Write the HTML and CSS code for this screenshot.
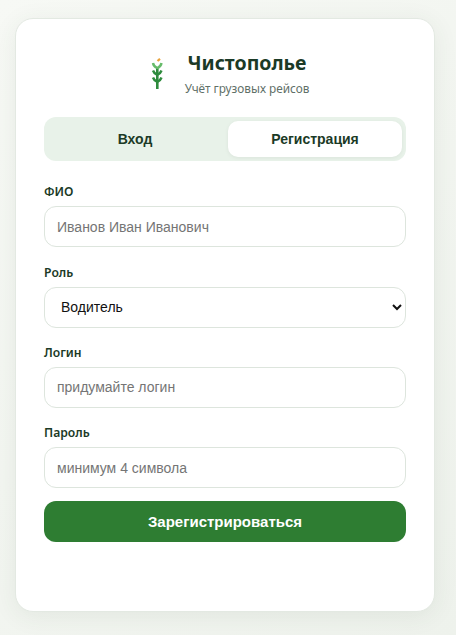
FILE: index.html
```html
<!DOCTYPE html>
<html lang="ru">
<head>
<meta charset="utf-8">
<title>Чистополье</title>
<link rel="stylesheet" href="styles.css">
</head>
<body>
<main class="card">
  <header class="brand">
    <svg class="logo" width="12" height="31" viewBox="0 0 12 31" aria-hidden="true">
      <path d="M6.3 31V9" stroke="#2e8b3d" stroke-width="2.6" fill="none"/>
      <path d="M2 5Q2.5 8.5 6.3 10Q10 8.5 10.5 5" stroke="#66bb6a" stroke-width="2.4" fill="none"/>
      <path d="M2 12.5Q3 15.5 6.3 17Q9.5 15.5 10.5 12.5M2 19.5Q3 22.5 6.3 24Q9.5 22.5 10.5 19.5" stroke="#2e8b3d" stroke-width="2.4" fill="none"/>
      <path d="M6.5 3 9 .8" stroke="#e8a33d" stroke-width="2.2" fill="none"/>
    </svg>
    <div class="brand-text">
      <h1 class="title">Чистополье</h1>
      <p class="subtitle">Учёт грузовых рейсов</p>
    </div>
  </header>
  <div class="tabs">
    <button class="tab" type="button">Вход</button>
    <button class="tab tab-active" type="button">Регистрация</button>
  </div>
  <form class="form">
    <div class="field">
      <label class="label" for="fio">ФИО</label>
      <input class="control" id="fio" type="text" placeholder="Иванов Иван Иванович">
    </div>
    <div class="field">
      <label class="label" for="role">Роль</label>
      <select class="control select" id="role">
        <option>Водитель</option>
      </select>
    </div>
    <div class="field">
      <label class="label" for="login">Логин</label>
      <input class="control" id="login" type="text" placeholder="придумайте логин">
    </div>
    <div class="field">
      <label class="label" for="pass">Пароль</label>
      <input class="control" id="pass" type="text" placeholder="минимум 4 символа">
    </div>
    <button class="submit" type="button">Зарегистрироваться</button>
  </form>
</main>
</body>
</html>
```
FILE: styles.css
```css
* { box-sizing: border-box; }
html, body { height: 100%; }
body {
  margin: 0;
  height: 635px;
  overflow: hidden;
  padding: 18px 21px 23px 15px;
  background: linear-gradient(135deg, #f7f9f5 0%, #eef2ec 100%);
  font-family: "Liberation Sans", Arial, sans-serif;
  color: #1b3a26;
}
.card {
  width: 420px;
  height: 594px;
  padding: 28px;
  background: #fff;
  border: 1px solid #e3e9e2;
  border-radius: 18px;
  box-shadow: 0 4px 24px rgba(46, 80, 50, 0.08);
}
.brand {
  display: flex;
  align-items: center;
  justify-content: center;
  gap: 22px;
  height: 53px;
  margin-bottom: 17px;
  padding-left: 10px;
}
.logo { flex: none; margin-top: -1px; }
.brand-text { text-align: center; }
.title {
  margin: 0;
  font: 700 19.5px/24px "Noto Sans", sans-serif;
  color: #1b3a26;
}
.subtitle {
  margin: 5px 0 0;
  font: 400 11.8px/16px "Noto Sans", sans-serif;
  color: #5f7068;
}
.tabs {
  display: grid;
  grid-template-columns: 1fr 1fr;
  gap: 6px;
  height: 44px;
  padding: 4px;
  background: #e8f2e9;
  border-radius: 12px;
}
.tab {
  border: 0;
  border-radius: 10px;
  background: transparent;
  font: 700 14px "Liberation Sans", sans-serif;
  color: #1b3a26;
}
.tab-active {
  background: #fff;
  box-shadow: 0 1px 4px rgba(0, 0, 0, 0.06);
}
.form { margin-top: 22.3px; }
.field { margin-bottom: 16.33px; }
.label {
  display: block;
  margin-bottom: 6px;
  font: 600 12.2px/17px "Noto Sans", sans-serif;
  color: #1b3a26;
}
.control {
  display: block;
  width: 100%;
  height: 41px;
  padding: 0 12px;
  background: #fff;
  border: 1px solid #dde5dd;
  border-radius: 12px;
  font: 400 14px "Liberation Sans", sans-serif;
  color: #1b3a26;
}
.control::placeholder { color: #757575; opacity: 1; }
.select { color: #111; }
.submit {
  display: block;
  width: 100%;
  height: 41px;
  margin-top: -3.5px;
  border: 0;
  border-radius: 12px;
  background: #2e7d32;
  color: #fff;
  font: 700 15px "Liberation Sans", sans-serif;
}
```
